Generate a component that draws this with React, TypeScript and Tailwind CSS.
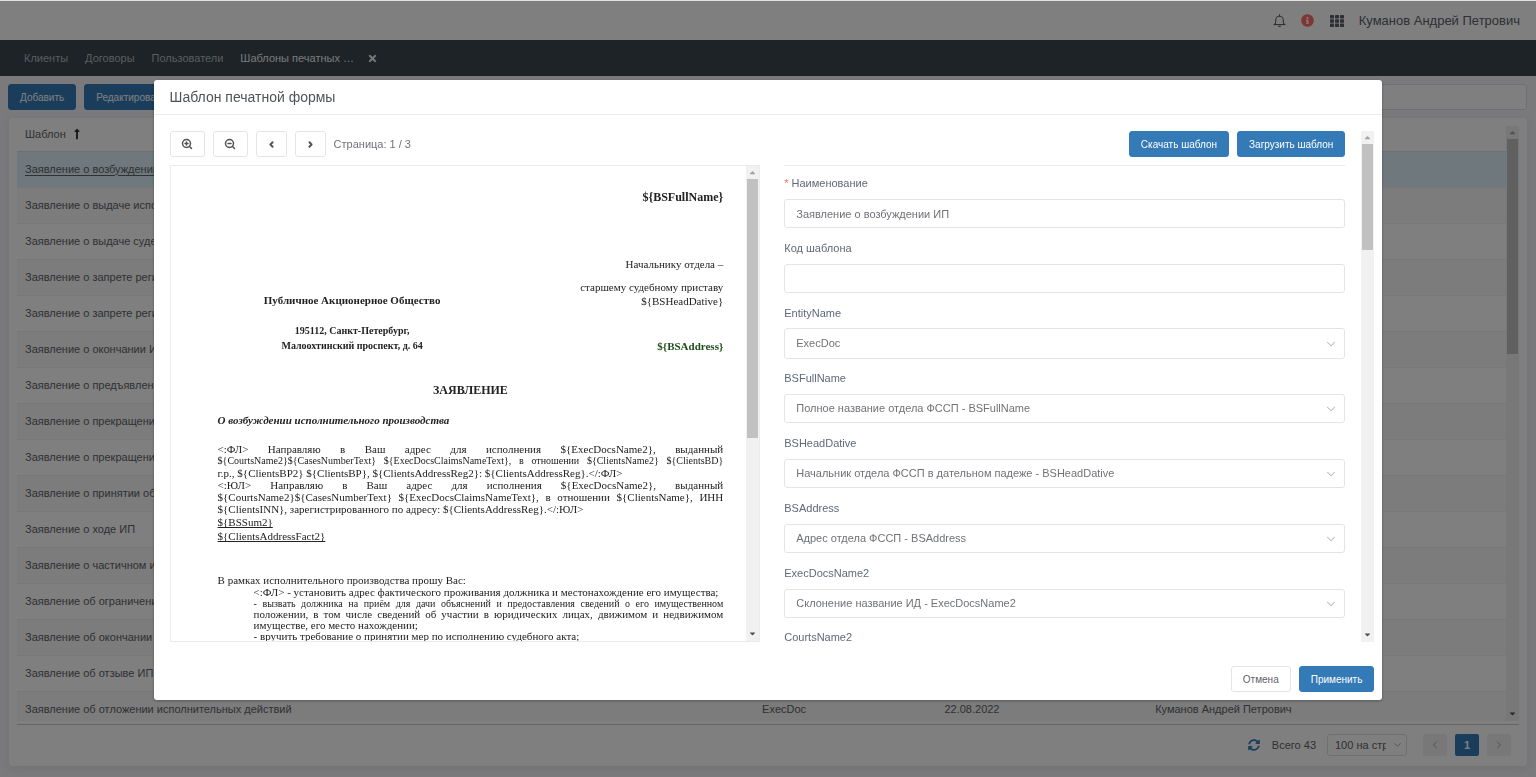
import { useState } from "react";
import type { ReactNode } from "react";
import {
  FaCaretDown,
  FaCaretUp,
  FaInfoCircle,
  FaLongArrowAltUp,
  FaSyncAlt,
  FaTimes,
} from "react-icons/fa";
import { ChevronDown, ChevronLeft, ChevronRight, ZoomIn, ZoomOut } from "lucide-react";

type Row = { name: string; entity?: string; date?: string; author?: string };

const author = "Куманов Андрей Петрович";

const rows: Row[] = [
  { name: "Заявление о возбуждении ИП" },
  { name: "Заявление о выдаче исполнительного листа" },
  { name: "Заявление о выдаче судебного приказа" },
  { name: "Заявление о запрете регистрации" },
  { name: "Заявление о запрете регистрации" },
  { name: "Заявление о окончании ИП" },
  { name: "Заявление о предъявлении" },
  { name: "Заявление о прекращении" },
  { name: "Заявление о прекращении" },
  { name: "Заявление о принятии обеспечения" },
  { name: "Заявление о ходе ИП" },
  { name: "Заявление о частичном исполнении" },
  { name: "Заявление об ограничении" },
  { name: "Заявление об окончании" },
  { name: "Заявление об отзыве ИП" },
  { name: "Заявление об отложении исполнительных действий", entity: "ExecDoc", date: "22.08.2022", author },
];

const mappings = [
  { id: "EntityName", value: "ExecDoc", tall: true },
  { id: "BSFullName", value: "Полное название отдела ФССП - BSFullName" },
  { id: "BSHeadDative", value: "Начальник отдела ФССП в дательном падеже - BSHeadDative" },
  { id: "BSAddress", value: "Адрес отдела ФССП - BSAddress" },
  { id: "ExecDocsName2", value: "Склонение название ИД - ExecDocsName2" },
];

function BellIcon() {
  return (
    <svg viewBox="0 0 24 24" className="size-[13px]" fill="none" stroke="currentColor" strokeWidth="2">
      <path d="M12 0.5v3.5" />
      <path d="M2.5 19.5c2-1 2.5-2.5 2.5-5V11a7 7 0 0 1 14 0v3.5c0 2.5.5 4 2.5 5" />
      <path d="M1 19.5h22" />
      <path d="M9.5 22.8h5" />
    </svg>
  );
}

function GridIcon() {
  return (
    <svg viewBox="0 0 14 12" className="h-3 w-3.5" fill="currentColor">
      {[0, 5, 10].map((x) =>
        [0, 4.3, 8.6].map((y) => <rect key={`${x}-${y}`} x={x} y={y} width="4" height="3.4" rx="0.4" />),
      )}
    </svg>
  );
}

function Scrollbar({ thumb }: { thumb: string }) {
  return (
    <div aria-hidden="true" className="flex w-[13px] shrink-0 flex-col items-center bg-[#f1f1f1]">
      <div className="flex h-[13px] items-center text-[#a3a3a3]">
        <FaCaretUp size={9} />
      </div>
      <div className="min-h-0 w-[11px] flex-1">
        <div className={`w-full bg-[#c1c1c1] ${thumb}`} />
      </div>
      <div className="flex h-[15px] items-center text-[#505050]">
        <FaCaretDown size={9} />
      </div>
    </div>
  );
}

function Button({ primary, children }: { primary?: boolean; children: ReactNode }) {
  return (
    <button
      type="button"
      className={`flex h-[26px] shrink-0 items-center justify-center rounded-[3px] border px-[11px] text-[10px] ${
        primary ? "border-[#337ab7] bg-[#337ab7] font-medium text-white" : "border-[#e2e4ea] bg-white text-[#606266]"
      }`}
    >
      {children}
    </button>
  );
}

function ToolButton({ label, width, children }: { label: string; width: string; children: ReactNode }) {
  return (
    <button
      type="button"
      aria-label={label}
      className={`flex h-[26px] items-center justify-center rounded-[3px] border border-[#e2e4ea] ${width}`}
    >
      {children}
    </button>
  );
}

function Field({ id, label, required, children }: { id: string; label: string; required?: boolean; children: ReactNode }) {
  return (
    <div className="mb-[11px]">
      <label htmlFor={id} className="mb-[7px] block h-[18px] text-[11px] leading-[18px] text-[#606879]">
        {required && <span className="mr-[3px] text-[#f56c6c]">*</span>}
        {label}
      </label>
      {children}
    </div>
  );
}

const control = "block w-full rounded-[3px] border border-[#e2e4ea] bg-white px-[11px] text-[11px] text-[#707277] outline-none";

function Line({ small, children }: { small?: boolean; children: ReactNode }) {
  return <div className={`whitespace-nowrap [text-align-last:justify] ${small ? "text-[10px]" : ""}`}>{children}</div>;
}

function DocumentPage() {
  return (
    <div className="min-w-0 flex-1 overflow-hidden pl-[47px] pr-[23px] pt-6 font-['Liberation_Serif',serif] text-[11px] leading-[14px] text-[#222]">
      <p className="text-right text-[12px] font-bold">{"${BSFullName}"}</p>
      <div className="flex pt-[53px]">
        <div className="w-[269px] pt-9 text-center font-bold">
          <p className="pb-4">Публичное Акционерное Общество</p>
          <div className="text-[10px] leading-[15px]">
            <p>195112, Санкт-Петербург,</p>
            <p>Малоохтинский проспект, д. 64</p>
          </div>
        </div>
        <div className="flex-1 text-right">
          <p className="pb-[9px]">Начальнику отдела –</p>
          <p>старшему судебному приставу</p>
          <p>{"${BSHeadDative}"}</p>
          <p className="pt-[31px] font-bold text-[#1d4d1d]">{"${BSAddress}"}</p>
        </div>
      </div>
      <h3 className="pt-[30px] text-center text-[12px] font-bold">ЗАЯВЛЕНИЕ</h3>
      <p className="pt-4 font-bold italic">О возбуждении исполнительного производства</p>
      <div className="pt-4 leading-[12px]">
        <Line>{"<:ФЛ> Направляю в Ваш адрес для исполнения ${ExecDocsName2}, выданный"}</Line>
        <Line small>{"${CourtsName2}${CasesNumberText} ${ExecDocsClaimsNameText}, в отношении ${ClientsName2} ${ClientsBD}"}</Line>
        <div>{"г.р., ${ClientsBP2} ${ClientsBP}, ${ClientsAddressReg2}: ${ClientsAddressReg}.</:ФЛ>"}</div>
        <Line>{"<:ЮЛ> Направляю в Ваш адрес для исполнения ${ExecDocsName2}, выданный"}</Line>
        <Line>{"${CourtsName2}${CasesNumberText} ${ExecDocsClaimsNameText}, в отношении ${ClientsName}, ИНН"}</Line>
        <div>{"${ClientsINN}, зарегистрированного по адресу: ${ClientsAddressReg}.</:ЮЛ>"}</div>
      </div>
      <p className="underline">{"${BSSum2}"}</p>
      <p className="underline">{"${ClientsAddressFact2}"}</p>
      <p className="pt-[30px]">В рамках исполнительного производства прошу Вас:</p>
      <div className="pl-9 leading-[11px]">
        <div className="whitespace-nowrap">{"<:ФЛ> - установить адрес фактического проживания должника и местонахождение его имущества;"}</div>
        <Line small>- вызвать должника на приём для дачи объяснений и предоставления сведений о его имущественном</Line>
        <Line>положении, в том числе сведений об участии в юридических лицах, движимом и недвижимом</Line>
        <div>имуществе, его место нахождении;</div>
        <div>- вручить требование о принятии мер по исполнению судебного акта;</div>
      </div>
    </div>
  );
}

function TemplateDialog() {
  const [name, setName] = useState("Заявление о возбуждении ИП");
  const [code, setCode] = useState("");
  return (
    <div
      role="dialog"
      aria-labelledby="dialog-title"
      className="w-4/5 self-start rounded-[3px] bg-white shadow-[0_1px_3px_rgba(0,0,0,0.3)]"
    >
      <h2 id="dialog-title" className="border-b border-[#ebebed] px-4 text-[14px] leading-[34px] text-[#505357]">
        Шаблон печатной формы
      </h2>
      <div className="mt-4 flex h-[calc(100vh-266px)] gap-4 pl-4 pr-2">
        <div className="grid min-w-0 flex-1 grid-cols-[20fr_19fr] gap-6">
          <section className="flex min-h-0 min-w-0 flex-col">
            <div className="flex items-center gap-2 pb-2 text-[#505256]">
              <ToolButton label="Увеличить" width="w-[35px]">
                <ZoomIn size={12} strokeWidth={3} />
              </ToolButton>
              <ToolButton label="Уменьшить" width="w-[35px]">
                <ZoomOut size={12} strokeWidth={3} />
              </ToolButton>
              <ToolButton label="Назад" width="w-[31px]">
                <ChevronLeft size={9} strokeWidth={5} />
              </ToolButton>
              <ToolButton label="Вперёд" width="w-[31px]">
                <ChevronRight size={9} strokeWidth={5} />
              </ToolButton>
              <span className="text-[#707277]">Страница: 1 / 3</span>
            </div>
            <div className="flex min-h-0 flex-1 border border-[#ebebed]">
              <DocumentPage />
              <Scrollbar thumb="h-[58%]" />
            </div>
          </section>
          <form className="min-h-0 min-w-0 overflow-hidden">
            <div className="flex justify-end gap-2 border-b border-[#ebebed] pb-2">
              <Button primary>Скачать шаблон</Button>
              <Button primary>Загрузить шаблон</Button>
            </div>
            <div className="pt-2">
              <Field id="name" label="Наименование" required>
                <input id="name" value={name} onChange={(e) => setName(e.target.value)} className={`${control} h-[29px]`} />
              </Field>
              <Field id="code" label="Код шаблона">
                <input id="code" value={code} onChange={(e) => setCode(e.target.value)} className={`${control} h-[29px]`} />
              </Field>
              {mappings.map((m) => (
                <Field key={m.id} id={m.id} label={m.id}>
                  <div className={m.tall ? "relative -my-px" : "relative"}>
                    <select id={m.id} className={`${control} appearance-none ${m.tall ? "h-[31px]" : "h-[29px]"}`}>
                      <option>{m.value}</option>
                    </select>
                    <ChevronDown size={14} strokeWidth={1.75} className="pointer-events-none absolute right-[7px] top-1/2 -translate-y-1/2 text-[#b4b8c0]" />
                  </div>
                </Field>
              ))}
              <span className="block pt-[3px] text-[11px] leading-[10px] text-[#606879]">CourtsName2</span>
            </div>
          </form>
        </div>
        <Scrollbar thumb="h-[22%]" />
      </div>
      <div className="flex justify-end gap-2 px-2 pb-2 pt-6">
        <Button>Отмена</Button>
        <Button primary>Применить</Button>
      </div>
    </div>
  );
}

export default function App() {
  return (
    <div className="flex h-screen flex-col border-t border-[#dfe3e3] bg-[#f4f4f9] font-['Liberation_Sans',Arial,sans-serif] text-[11px] text-[#606266]">
      <header className="flex h-[39px] shrink-0 items-center justify-end bg-white pr-4 text-[#5a6068]">
        <BellIcon />
        <FaInfoCircle size={13} className="ml-[15px] text-[#ff6b6b]" />
        <span className="ml-4">
          <GridIcon />
        </span>
        <span className="ml-[15px] text-[13px] text-[#5a6068]">{author}</span>
      </header>
      <nav className="flex h-9 shrink-0 items-center gap-[17px] bg-[#3b464d] pl-6 text-[#b4babf]">
        <a href="#clients">Клиенты</a>
        <a href="#contracts">Договоры</a>
        <a href="#users">Пользователи</a>
        <div className="flex items-center gap-[13px] text-[#f0f2f3]">
          <a href="#templates">Шаблоны печатных …</a>
          <button type="button" aria-label="Закрыть вкладку">
            <FaTimes size={11} />
          </button>
        </div>
      </nav>
      <div className="flex shrink-0 gap-2 pb-2 pl-2 pr-[9px] pt-2">
        <Button primary>Добавить</Button>
        <Button primary>Редактировать</Button>
        <input aria-label="Поиск" className="h-[26px] min-w-0 flex-1 rounded-[3px] border border-[#dcdfe6] bg-white px-3 outline-none" />
      </div>
      <main className="mx-[9px] mb-[11px] flex min-h-0 flex-1 flex-col rounded-[3px] bg-white px-2 pt-2 shadow-[0_2px_8px_rgba(0,0,0,0.08)]">
        <div className="flex min-h-0 flex-1 border-b border-[#c8cacf] pb-[3px]">
          <div className="min-w-0 flex-1 overflow-hidden">
            <table className="w-full table-fixed border-collapse text-left">
              <thead>
                <tr className="h-[25px] border-b border-[#dcdfe6]">
                  <th className="w-[49.5%] px-2 pb-2 font-normal">
                    <span className="flex items-center gap-[5px]">
                      Шаблон <FaLongArrowAltUp size={12} className="text-[#333]" />
                    </span>
                  </th>
                  <th className="w-[12.25%]" />
                  <th className="w-[14.15%]" />
                  <th />
                </tr>
              </thead>
              <tbody>
                {rows.map((r, i) => (
                  <tr
                    key={i}
                    className={`h-9 border-b border-[#ebeef5] ${i === 0 ? "bg-[#def0f8]" : i % 2 ? "bg-[#f8f8f8]" : "bg-white"}`}
                  >
                    <td className={`px-2 ${i === 0 ? "underline underline-offset-2" : ""}`}>{r.name}</td>
                    <td className="px-2">{r.entity}</td>
                    <td className="px-2">{r.date}</td>
                    <td className="px-2">{r.author}</td>
                  </tr>
                ))}
              </tbody>
            </table>
          </div>
          <Scrollbar thumb="h-[38%]" />
        </div>
        <div className="flex shrink-0 items-center justify-end pb-[10px] pr-2 pt-[9px]">
          <button type="button" aria-label="Обновить" className="text-[#337ab7]">
            <FaSyncAlt size={12} />
          </button>
          <span className="ml-3">Всего 43</span>
          <div className="relative ml-[11px]">
            <select aria-label="Записей на странице" className="block h-[22px] w-20 appearance-none rounded-[3px] border border-[#dcdfe6] bg-white pl-[7px] pr-5 outline-none">
              <option>100 на странице</option>
            </select>
            <ChevronDown size={11} strokeWidth={2} className="pointer-events-none absolute right-1 top-1/2 -translate-y-1/2 text-[#a0a4ac]" />
          </div>
          <div className="ml-4 flex gap-2">
            <button type="button" aria-label="Предыдущая" className="flex h-[22px] w-6 items-center justify-center rounded-[2px] bg-[#f0f0f1] text-[#a0a4ac]">
              <ChevronLeft size={12} />
            </button>
            <button type="button" className="h-[22px] w-6 rounded-[2px] bg-[#337ab7] font-bold text-white">1</button>
            <button type="button" aria-label="Следующая" className="flex h-[22px] w-6 items-center justify-center rounded-[2px] bg-[#f0f0f1] text-[#a0a4ac]">
              <ChevronRight size={12} />
            </button>
          </div>
        </div>
      </main>
      <div className="fixed inset-x-0 bottom-0 top-px flex justify-center bg-black/50 pt-[79px]">
        <TemplateDialog />
      </div>
    </div>
  );
}
